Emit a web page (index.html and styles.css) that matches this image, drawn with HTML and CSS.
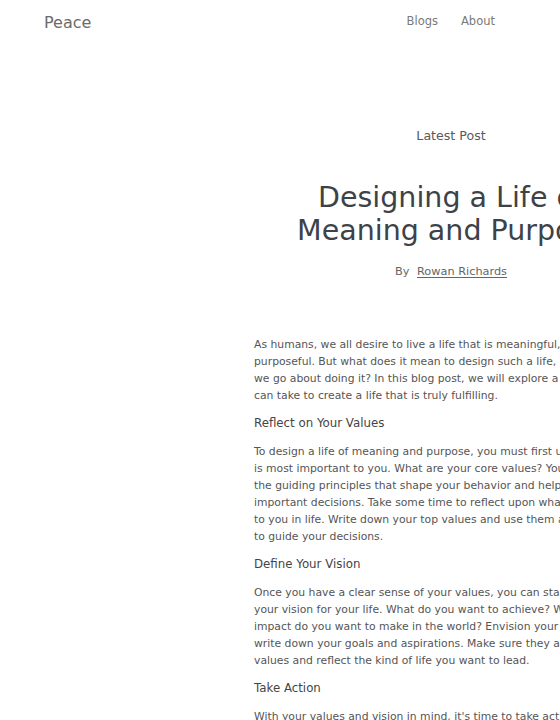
FILE: index.html
```html
<!DOCTYPE html>
<html lang="en">
<head>
    <meta charset="UTF-8">
    <meta name="viewport" content="width=device-width, initial-scale=1.0">
    <title>Peace - Designing a Life of Meaning and Purpose</title>
    <link rel="stylesheet" href="styles.css">
</head>
<body>
    <header class="site-header">
        <a class="brand" href="#">Peace</a>
        <nav class="nav">
            <a href="#">Blogs</a>
            <a href="#">About</a>
        </nav>
    </header>

    <main class="page">
        <article class="post">
            <p class="post-label">Latest Post</p>
            <h1 class="post-title">Designing a Life of Meaning and Purpose</h1>
            <p class="byline">By <a href="#">Rowan Richards</a></p>

            <div class="post-body">
                <p>As humans, we all desire to live a life that is meaningful, fulfilling, and purposeful. But what does it mean to design such a life, and how should we go about doing it? In this blog post, we will explore a few steps you can take to create a life that is truly fulfilling.</p>

                <h3>Reflect on Your Values</h3>
                <p>To design a life of meaning and purpose, you must first understand what is most important to you. What are your core values? Your values are the guiding principles that shape your behavior and help you make important decisions. Take some time to reflect upon what truly matters to you in life. Write down your top values and use them as the compass to guide your decisions.</p>

                <h3>Define Your Vision</h3>
                <p>Once you have a clear sense of your values, you can start to determine your vision for your life. What do you want to achieve? What kind of impact do you want to make in the world? Envision your ideal life, and write down your goals and aspirations. Make sure they align with your values and reflect the kind of life you want to lead.</p>

                <h3>Take Action</h3>
                <p>With your values and vision in mind, it's time to take action. Break your goals down into small, manageable steps and start working on them one at a time.</p>
            </div>
        </article>
    </main>
</body>
</html>
```

FILE: styles.css
```css
body {
    margin: 0;
    font-family: "DejaVu Sans", sans-serif;
    color: #555;
    background: #fff;
    overflow-x: hidden;
}
a {
    color: inherit;
    text-decoration: none;
}

/* header */
.site-header {
    display: flex;
    align-items: center;
    justify-content: space-between;
    height: 44px;
    padding: 0 65px 0 44px;
}
.brand {
    font-size: 16px;
    color: #6b6b6b;
}
.nav {
    display: flex;
    gap: 23px;
    margin-top: -2px;
}
.nav a {
    font-size: 11.5px;
    color: #7a7a7a;
}

/* post */
.page {
    width: 902px;
}
.post {
    width: 394px;
    margin: 0 auto;
}
.post-label {
    margin: 83px 0 0;
    font-size: 12.6px;
    line-height: 18px;
    text-align: center;
    color: #5a5a5a;
}
.post-title {
    max-width: 360px;
    margin: 36px auto 0;
    font-size: 28.5px;
    font-weight: normal;
    line-height: 33px;
    text-align: center;
    color: #3d4249;
}
.byline {
    margin: 16px 0 0;
    font-size: 11.3px;
    line-height: 17px;
    text-align: center;
    color: #666;
}
.byline a {
    margin-left: 4px;
    text-decoration: underline;
    text-underline-offset: 2px;
}
.post-body {
    margin-top: 56px;
    font-size: 10.8px;
    line-height: 17px;
}
.post-body p {
    margin: 0 0 11px;
}
.post-body h3 {
    margin: 0 0 11px;
    font-size: 11.8px;
    font-weight: normal;
    line-height: 17px;
    color: #444;
}
```
